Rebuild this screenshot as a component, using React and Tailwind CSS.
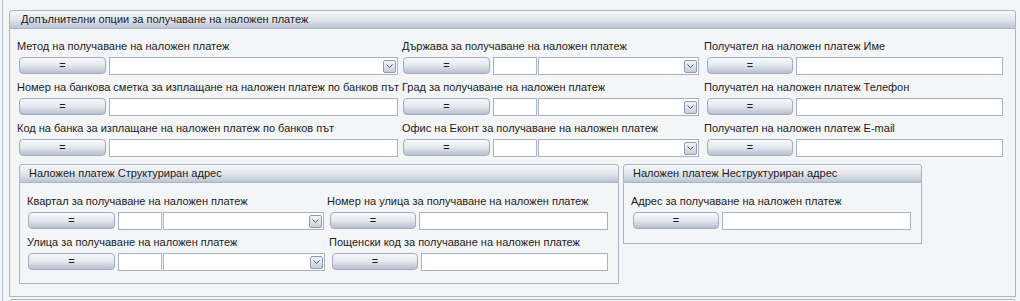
import React from 'react';

const font = { fontFamily: '"Liberation Sans", Arial, sans-serif' };

const EqButton = ({ w = 'w-[87px]', className = '' }) => (
  <button
    className={`${w} h-[17px] shrink-0 rounded-[4px] border border-[#a3adbf] bg-gradient-to-b from-[#f8f9fb] via-[#e3e7ee] to-[#b7c0cf] text-[11px] leading-[15px] text-[#1b1b1b] ${className}`}
  >
    =
  </button>
);

const TextBox = ({ w }) => (
  <div className={`${w} h-[18px] shrink-0 border border-[#a6b3c7] bg-white`} />
);

const SelectBox = ({ w }) => (
  <div className={`${w} h-[18px] shrink-0 border border-[#a6b3c7] bg-white flex items-center justify-end pr-[1px]`}>
    <div className="w-[13px] h-[13px] rounded-[2px] border border-[#8e9bb1] bg-gradient-to-b from-[#f3f5f8] to-[#c8d0dc] flex items-center justify-center">
      <svg width="7" height="4" viewBox="0 0 7 4">
        <path d="M0.5 0.5 L3.5 3.5 L6.5 0.5" fill="none" stroke="#4b5565" strokeWidth="1" />
      </svg>
    </div>
  </div>
);

const Label = ({ children }) => (
  <div className="h-[14px] leading-[14px] text-[11px] text-[#1b1b1b] whitespace-nowrap">{children}</div>
);

const Header = ({ children, className = '' }) => (
  <div
    className={`h-[19px] rounded-t-[3px] border border-[#a9b4c6] bg-gradient-to-b from-[#f7f8fa] via-[#e2e6ed] to-[#bcc5d4] flex items-center text-[11px] text-[#1b1b1b] whitespace-nowrap ${className}`}
  >
    {children}
  </div>
);

const Field = ({ label, width, ml = 'ml-0', lml = 'ml-0', children }) => (
  <div className={`${width} shrink-0 flex flex-col gap-[4px]`}>
    <div className={lml}>
      <Label>{label}</Label>
    </div>
    <div className={`flex items-start ${ml}`}>{children}</div>
  </div>
);

const App = () => {
  return (
    <div className="w-[1020px] h-[301px] overflow-hidden bg-[#f4f5f7]" style={font}>
      <div className="ml-[2px] h-full border-l border-[#b4bfcf] pl-[6px] pt-[10px] pr-[4px]">
        {/* Main section */}
        <div className="w-[1007px]">
          <Header className="pl-[11px]">Допълнителни опции за получаване на наложен платеж</Header>
          <div className="border border-t-0 border-[#a9b4c6] pl-[7px] pt-[10px] pb-[12px]">
            <div className="flex flex-col gap-[5px]">
              <div className="flex">
                <Field label="Метод на получаване на наложен платеж" width="w-[385px]" ml="ml-[2px]">
                  <EqButton />
                  <div className="w-[3px]" />
                  <SelectBox w="w-[289px]" />
                </Field>
                <Field label="Държава за получаване на наложен платеж" width="w-[301px]" ml="ml-[1px]">
                  <EqButton />
                  <div className="w-[3px]" />
                  <TextBox w="w-[44px]" />
                  <div className="w-[1px]" />
                  <SelectBox w="w-[161px]" />
                </Field>
                <Field label="Получател на наложен платеж Име" width="w-[303px]" lml="ml-[1px]" ml="ml-[4px]">
                  <EqButton w="w-[86px]" />
                  <div className="w-[3px]" />
                  <TextBox w="w-[207px]" />
                </Field>
              </div>
              <div className="flex">
                <Field label="Номер на банкова сметка за изплащане на наложен платеж по банков път" width="w-[385px]" ml="ml-[2px]">
                  <EqButton />
                  <div className="w-[3px]" />
                  <TextBox w="w-[289px]" />
                </Field>
                <Field label="Град за получаване на наложен платеж" width="w-[301px]" ml="ml-[1px]">
                  <EqButton />
                  <div className="w-[3px]" />
                  <TextBox w="w-[44px]" />
                  <div className="w-[1px]" />
                  <SelectBox w="w-[161px]" />
                </Field>
                <Field label="Получател на наложен платеж Телефон" width="w-[303px]" lml="ml-[1px]" ml="ml-[4px]">
                  <EqButton w="w-[86px]" />
                  <div className="w-[3px]" />
                  <TextBox w="w-[207px]" />
                </Field>
              </div>
              <div className="flex">
                <Field label="Код на банка за изплащане на наложен платеж по банков път" width="w-[385px]" ml="ml-[2px]">
                  <EqButton />
                  <div className="w-[3px]" />
                  <TextBox w="w-[289px]" />
                </Field>
                <Field label="Офис на Еконт за получаване на наложен платеж" width="w-[301px]" ml="ml-[1px]">
                  <EqButton />
                  <div className="w-[3px]" />
                  <TextBox w="w-[44px]" />
                  <div className="w-[1px]" />
                  <SelectBox w="w-[161px]" />
                </Field>
                <Field label="Получател на наложен платеж E-mail" width="w-[303px]" lml="ml-[1px]" ml="ml-[4px]">
                  <EqButton w="w-[86px]" />
                  <div className="w-[3px]" />
                  <TextBox w="w-[207px]" />
                </Field>
              </div>
            </div>

            {/* Address sub-sections */}
            <div className="flex items-start gap-[4px] ml-[2px] mt-[7px]">
              <div className="w-[600px] shrink-0">
                <Header className="pl-[9px]">Наложен платеж Структуриран адрес</Header>
                <div className="border border-t-0 border-[#a9b4c6] pl-[7px] pt-[11px] pb-[12px] flex flex-col gap-[5px]">
                  <div className="flex">
                    <Field label="Квартал за получаване на наложен платеж" width="w-[300px]" ml="ml-[1px]">
                      <EqButton />
                      <div className="w-[3px]" />
                      <TextBox w="w-[44px]" />
                      <div className="w-[1px]" />
                      <SelectBox w="w-[161px]" />
                    </Field>
                    <Field label="Номер на улица за получаване на наложен платеж" width="w-[285px]" ml="ml-[3px]">
                      <EqButton w="w-[86px]" />
                      <div className="w-[3px]" />
                      <TextBox w="w-[189px]" />
                    </Field>
                  </div>
                  <div className="flex">
                    <Field label="Улица за получаване на наложен платеж" width="w-[302px]" ml="ml-[1px]">
                      <EqButton />
                      <div className="w-[3px]" />
                      <TextBox w="w-[44px]" />
                      <div className="w-[1px]" />
                      <SelectBox w="w-[162px]" />
                    </Field>
                    <Field label="Пощенски код за получаване на наложен платеж" width="w-[283px]" ml="ml-[3px]">
                      <EqButton w="w-[86px]" />
                      <div className="w-[3px]" />
                      <TextBox w="w-[187px]" />
                    </Field>
                  </div>
                </div>
              </div>

              <div className="w-[299px] shrink-0">
                <Header className="pl-[9px]">Наложен платеж Неструктуриран адрес</Header>
                <div className="border border-t-0 border-[#a9b4c6] pl-[7px] pt-[11px] pb-[13px]">
                  <Field label="Адрес за получаване на наложен платеж" width="w-[285px]" ml="ml-[2px]">
                    <EqButton w="w-[86px]" />
                    <div className="w-[3px]" />
                    <TextBox w="w-[189px]" />
                  </Field>
                </div>
              </div>
            </div>
          </div>
        </div>

        {/* Next section, cut off */}
        <div className="w-[1007px] mt-[2px]">
          <Header className="pl-[11px]"> </Header>
        </div>
      </div>
    </div>
  );
};

export default App;
